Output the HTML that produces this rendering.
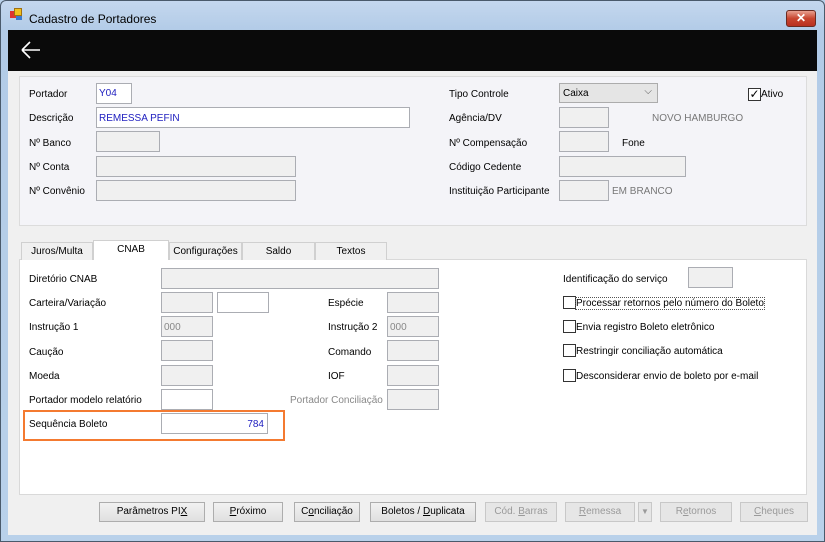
<!DOCTYPE html>
<html><head><meta charset="utf-8"><style>
*{margin:0;padding:0;box-sizing:border-box}
body{width:825px;height:542px;overflow:hidden;font-family:"Liberation Sans",sans-serif;font-size:10px;color:#000;background:#b9d1ea;position:relative}
.a{position:absolute}
.frame{left:0;top:0;width:825px;height:542px;border:1px solid #4a5a6b;border-radius:6px 6px 0 0;background:linear-gradient(#c4d7ee,#b2cbe7 30px,#b9d1ea)}
.in{border:1px solid #abadb3;background:#f0f0f0}
.lbl{white-space:nowrap;margin-top:1px}
.cb{width:13px;height:13px;border:1px solid #333;background:#fff}
.btn{height:20px;border:1px solid #adadad;background:linear-gradient(#f2f2f2,#e0e0e0);text-align:center;line-height:18px;font-size:10px}
.dis{color:#9a9a9a;border-color:#c8c8c8;background:#e6e6e6}
.tab{top:242px;height:18px;border:1px solid #d0d0d0;border-bottom:none;background:#f0f0f0;text-align:center;line-height:18px}
</style></head><body>
<div class="a frame"></div>
<div class="a" style="left:10px;top:11px;width:7px;height:7px;background:#d33"></div>
<div class="a" style="left:14px;top:8px;width:8px;height:8px;background:#f0c020;border:1px solid #a07010"></div>
<div class="a" style="left:16px;top:16px;width:6px;height:4px;background:#3a7ad0"></div>
<div class="a lbl" style="left:29px;top:11px;font-size:12px">Cadastro de Portadores</div>
<div class="a" style="left:786px;top:10px;width:30px;height:17px;border:1px solid #6b2b22;border-radius:3px;background:linear-gradient(#e8a090,#c8452f 50%,#b83020);color:#fff;text-align:center;font-weight:bold;font-size:12px;line-height:15px">✕</div>
<div class="a" style="left:8px;top:30px;width:809px;height:505px;background:#f0f0f0"></div>
<div class="a" style="left:8px;top:30px;width:809px;height:41px;background:#0a0a0a"></div>
<svg class="a" style="left:20px;top:40px" width="22" height="20"><path d="M2 10H20M2 10L10 2M2 10L10 18" stroke="#fff" stroke-width="1.6" fill="none"/></svg>
<div class="a" style="left:19px;top:76px;width:788px;height:150px;border:1px solid #dcdcdc;background:#f4f4f8"></div>
<div class="a lbl" style="left:29px;top:88px">Portador</div>
<div class="a in" style="left:96px;top:83px;width:36px;height:21px;background:#fff;color:#2020c0;padding:4px 2px">Y04</div>
<div class="a lbl" style="left:29px;top:112px">Descrição</div>
<div class="a in" style="left:96px;top:107px;width:314px;height:21px;background:#fff;color:#2020c0;padding:5px 2px">REMESSA PEFIN</div>
<div class="a lbl" style="left:29px;top:137px">Nº Banco</div>
<div class="a in" style="left:96px;top:131px;width:64px;height:21px"></div>
<div class="a lbl" style="left:29px;top:161px">Nº Conta</div>
<div class="a in" style="left:96px;top:156px;width:200px;height:21px"></div>
<div class="a lbl" style="left:29px;top:185px">Nº Convênio</div>
<div class="a in" style="left:96px;top:180px;width:200px;height:21px"></div>
<div class="a lbl" style="left:449px;top:88px">Tipo Controle</div>
<div class="a" style="left:559px;top:83px;width:99px;height:20px;border:1px solid #acacac;background:#e5e5e5;padding:4px 3px">Caixa<span style="position:absolute;right:5px;top:2px;color:#555;font-size:10px">⌵</span></div>
<div class="a cb" style="left:748px;top:88px;font-size:12px;line-height:11px;text-align:center">✓</div>
<div class="a lbl" style="left:761px;top:88px">Ativo</div>
<div class="a lbl" style="left:449px;top:112px">Agência/DV</div>
<div class="a in" style="left:559px;top:107px;width:50px;height:21px"></div>
<div class="a lbl" style="left:652px;top:112px;color:#777">NOVO HAMBURGO</div>
<div class="a lbl" style="left:449px;top:137px">Nº Compensação</div>
<div class="a in" style="left:559px;top:131px;width:50px;height:21px"></div>
<div class="a lbl" style="left:622px;top:137px">Fone</div>
<div class="a lbl" style="left:449px;top:161px">Código Cedente</div>
<div class="a in" style="left:559px;top:156px;width:127px;height:21px"></div>
<div class="a lbl" style="left:449px;top:185px">Instituição Participante</div>
<div class="a in" style="left:559px;top:180px;width:50px;height:21px"></div>
<div class="a lbl" style="left:612px;top:185px;color:#777">EM BRANCO</div>
<div class="a" style="left:19px;top:259px;width:788px;height:236px;border:1px solid #d9d9d9;background:#fff"></div>
<div class="a tab" style="left:21px;width:72px">Juros/Multa</div>
<div class="a tab" style="left:93px;top:240px;width:76px;height:20px;background:#fff;line-height:17px">CNAB</div>
<div class="a tab" style="left:169px;width:73px">Configurações</div>
<div class="a tab" style="left:242px;width:73px">Saldo</div>
<div class="a tab" style="left:315px;width:72px">Textos</div>
<div class="a lbl" style="left:29px;top:273px">Diretório CNAB</div>
<div class="a in" style="left:161px;top:268px;width:278px;height:21px"></div>
<div class="a lbl" style="left:29px;top:297px">Carteira/Variação</div>
<div class="a in" style="left:161px;top:292px;width:52px;height:21px"></div>
<div class="a in" style="left:217px;top:292px;width:52px;height:21px;background:#fff"></div>
<div class="a lbl" style="left:29px;top:321px">Instrução 1</div>
<div class="a in" style="left:161px;top:316px;width:52px;height:21px;color:#888;padding:5px 2px">000</div>
<div class="a lbl" style="left:29px;top:346px">Caução</div>
<div class="a in" style="left:161px;top:340px;width:52px;height:21px"></div>
<div class="a lbl" style="left:29px;top:370px">Moeda</div>
<div class="a in" style="left:161px;top:365px;width:52px;height:21px"></div>
<div class="a lbl" style="left:29px;top:394px">Portador modelo relatório</div>
<div class="a in" style="left:161px;top:389px;width:52px;height:21px;background:#fff"></div>
<div class="a lbl" style="left:328px;top:297px">Espécie</div>
<div class="a in" style="left:387px;top:292px;width:52px;height:21px"></div>
<div class="a lbl" style="left:328px;top:321px">Instrução 2</div>
<div class="a in" style="left:387px;top:316px;width:52px;height:21px;color:#888;padding:5px 2px">000</div>
<div class="a lbl" style="left:328px;top:346px">Comando</div>
<div class="a in" style="left:387px;top:340px;width:52px;height:21px"></div>
<div class="a lbl" style="left:328px;top:370px">IOF</div>
<div class="a in" style="left:387px;top:365px;width:52px;height:21px"></div>
<div class="a lbl" style="left:290px;top:394px;color:#888">Portador Conciliação</div>
<div class="a in" style="left:387px;top:389px;width:52px;height:21px"></div>
<div class="a" style="left:23px;top:410px;width:262px;height:31px;border:2px solid #f47a30"></div>
<div class="a lbl" style="left:29px;top:418px">Sequência Boleto</div>
<div class="a in" style="left:161px;top:413px;width:107px;height:21px;background:#fff;color:#2020c0;text-align:right;padding:5px 3px">784</div>
<div class="a lbl" style="left:563px;top:273px">Identificação do serviço</div>
<div class="a in" style="left:688px;top:267px;width:45px;height:21px"></div>
<div class="a cb" style="left:563px;top:296px"></div>
<div class="a lbl" style="left:576px;top:297px;outline:1px dotted #555">Processar retornos pelo número do Boleto</div>
<div class="a cb" style="left:563px;top:320px"></div>
<div class="a lbl" style="left:576px;top:321px">Envia registro Boleto eletrônico</div>
<div class="a cb" style="left:563px;top:344px"></div>
<div class="a lbl" style="left:576px;top:345px">Restringir conciliação automática</div>
<div class="a cb" style="left:563px;top:369px"></div>
<div class="a lbl" style="left:576px;top:370px">Desconsiderar envio de boleto por e-mail</div>
<div class="a btn" style="left:99px;top:502px;width:106px">Parâmetros PI<u>X</u></div>
<div class="a btn" style="left:213px;top:502px;width:70px"><u>P</u>róximo</div>
<div class="a btn" style="left:294px;top:502px;width:66px">C<u>o</u>nciliação</div>
<div class="a btn" style="left:370px;top:502px;width:106px">Boletos / <u>D</u>uplicata</div>
<div class="a btn dis" style="left:485px;top:502px;width:72px">Cód. <u>B</u>arras</div>
<div class="a btn dis" style="left:565px;top:502px;width:70px"><u>R</u>emessa</div>
<div class="a btn dis" style="left:638px;top:502px;width:14px;font-size:8px">▼</div>
<div class="a btn dis" style="left:660px;top:502px;width:72px">R<u>e</u>tornos</div>
<div class="a btn dis" style="left:740px;top:502px;width:68px"><u>C</u>heques</div>
</body></html>
